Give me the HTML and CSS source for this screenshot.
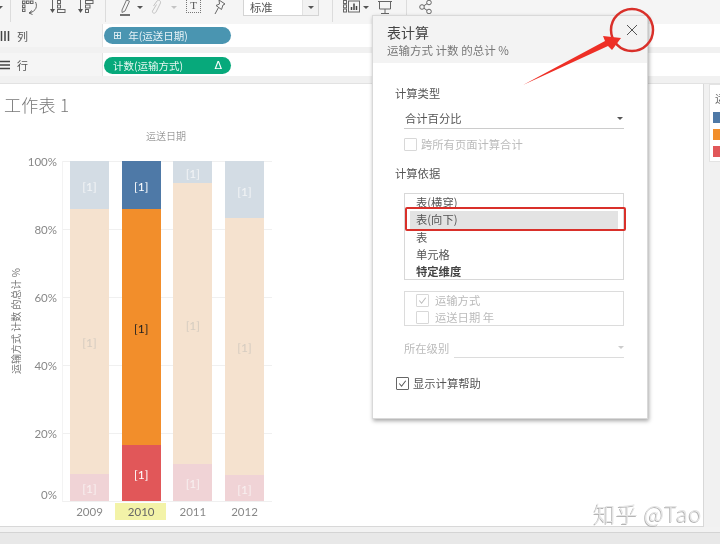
FILE: index.html
```html
<!DOCTYPE html>
<html lang="zh">
<head>
<meta charset="utf-8">
<title>表计算</title>
<link rel="stylesheet" href="styles.css">
</head>
<body>
<div class="app">
  <header class="toolbar">
    <span class="caret caret-edge"></span>
    <span class="tb-sep tb-sep-a"></span>
    <svg class="tb-ic tb-swap" viewBox="0 0 16 15"><rect x="0.500" y="1" width="2.500" height="2.500"/><rect x="4.500" y="1" width="2.500" height="2.500"/><rect x="8.500" y="1" width="2.500" height="2.500"/><rect x="0.500" y="5" width="2.500" height="2.500"/><rect x="0.500" y="9" width="2.500" height="2.500"/><path d="M13.500 2c2 4 1 9-6 11M10 10.500 7 13l3.500 1.500"/></svg>
    <svg class="tb-ic tb-sort" viewBox="0 0 16 14"><path d="M2.500 0v11" /><path class="tb-solid" d="M0 9h5l-2.500 4z"/><rect x="7.500" y="0.500" width="3" height="3"/><rect x="7.500" y="5" width="3" height="3"/><rect x="7.500" y="9.500" width="7.500" height="3"/></svg>
    <svg class="tb-ic tb-sort2" viewBox="0 0 16 14"><path d="M2.500 0v11"/><path class="tb-solid" d="M0 9h5l-2.500 4z"/><rect x="7.500" y="0.500" width="7.500" height="3"/><rect x="7.500" y="5" width="4.500" height="3"/><rect x="7.500" y="9.500" width="3" height="3"/></svg>
    <span class="tb-sep tb-sep-b"></span>
    <svg class="tb-ic tb-pen" viewBox="0 0 11 16"><path d="M2 10 6.500 0l3 1.200L5 11l-3 1.500z"/><path class="tb-under" d="M0 15h10"/></svg>
    <span class="caret caret-pen"></span>
    <svg class="tb-ic tb-clip" viewBox="0 0 11 15"><path d="M2.500 6 6 1c1.500-1.500 4-.5 3.500 2L5 12c-1 2-4 1.500-3.500-1l4-6.500"/></svg>
    <span class="caret caret-clip"></span>
    <span class="tb-t">T</span>
    <svg class="tb-ic tb-pin" viewBox="0 0 12 15"><path d="M5 0l6 4-2 1-1.500 4.500L2 5.500 5.500 4zM4.500 7.500 1 14"/></svg>
    <div class="tb-select"><span class="tb-select-text">标准</span><span class="tb-select-drop"><span class="caret"></span></span></div>
    <span class="tb-sep tb-sep-c"></span>
    <svg class="tb-ic tb-show" viewBox="0 0 17 13"><rect x="0.500" y="0.500" width="3" height="3"/><rect x="0.500" y="4.800" width="3" height="3"/><rect x="0.500" y="9" width="3" height="3"/><rect x="5.500" y="1" width="11" height="11"/><path class="tb-bars" d="M8.500 10V7M11 10V3.500M13.500 10V6"/></svg>
    <span class="caret caret-show"></span>
    <svg class="tb-ic tb-present" viewBox="0 0 14 15"><path d="M0 1.500h14M1.500 1.500v7.500h11V1.500M7 9v4.500M3 13.500h8"/></svg>
    <span class="tb-sep tb-sep-d"></span>
    <svg class="tb-ic tb-share" viewBox="0 0 13 14"><circle cx="3" cy="7" r="2.300"/><circle cx="10" cy="2.500" r="2.300"/><circle cx="10" cy="11.500" r="2.300"/><path d="M5 5.700l3-2M5 8.300l3 2"/></svg>
  </header>

  <section class="shelf shelf-col">
    <div class="shelf-label"><svg class="shelf-ic" viewBox="0 0 9 10"><path d="M1 0v10M4.500 0v10M8 0v10"/></svg><span>列</span></div>
    <div class="shelf-body"><div class="pill pill-blue"><span class="pill-plus">⊞</span><span>年(运送日期)</span></div></div>
  </section>
  <section class="shelf shelf-row">
    <div class="shelf-label"><svg class="shelf-ic" viewBox="0 0 10 9"><path d="M0 1h10M0 4.500h10M0 8h10"/></svg><span>行</span></div>
    <div class="shelf-body"><div class="pill pill-green"><span>计数(运输方式)</span><span class="pill-delta">Δ</span></div></div>
  </section>

  <main class="workspace">
    <div class="sheet">
      <h1 class="sheet-title">工作表 1</h1>
      <div class="col-title">运送日期</div>
      <div class="chart">
        <div class="y-title"><span>运输方式 计数 的总计 %</span></div>
        <div class="y-axis"><span>100%</span><span>80%</span><span>60%</span><span>40%</span><span>20%</span><span class="y-zero">0%</span></div>
        <div class="plot-wrap">
          <div class="plot">
            <div class="bar dim">
              <div class="seg seg-blue" style="height:14.1%">[1]</div>
              <div class="seg seg-orange" style="height:77.9%">[1]</div>
              <div class="seg seg-red" style="height:8%">[1]</div>
            </div>
            <div class="bar">
              <div class="seg seg-blue" style="height:14.1%">[1]</div>
              <div class="seg seg-orange" style="height:69.4%">[1]</div>
              <div class="seg seg-red" style="height:16.5%">[1]</div>
            </div>
            <div class="bar dim">
              <div class="seg seg-blue" style="height:6.5%">[1]</div>
              <div class="seg seg-orange" style="height:82.6%">[1]</div>
              <div class="seg seg-red" style="height:10.9%">[1]</div>
            </div>
            <div class="bar dim">
              <div class="seg seg-blue" style="height:16.8%">[1]</div>
              <div class="seg seg-orange" style="height:75.5%">[1]</div>
              <div class="seg seg-red" style="height:7.7%">[1]</div>
            </div>
          </div>
          <div class="x-axis"><span>2009</span><span class="x-hot">2010</span><span>2011</span><span>2012</span></div>
        </div>
      </div>
      <div class="watermark">知乎 @Tao</div>
    </div>
    <aside class="legend">
      <div class="legend-title">运</div>
      <div class="legend-swatch sw-blue"></div>
      <div class="legend-swatch sw-orange"></div>
      <div class="legend-swatch sw-red"></div>
    </aside>
  </main>
  <div class="status-gap"></div>
  <footer class="status"></footer>

  <div class="dialog">
    <div class="dlg-head">
      <div class="dlg-title">表计算</div>
      <div class="dlg-sub">运输方式 计数 的总计 %</div>
      <svg class="dlg-close" viewBox="0 0 10 10"><path d="M0 0l10 10M10 0L0 10"/></svg>
    </div>
    <div class="dlg-body">
      <div class="dlg-label dl-type">计算类型</div>
      <div class="combo"><span>合计百分比</span><span class="caret caret-dark"></span></div>
      <label class="check check-off"><span class="box"></span><span>跨所有页面计算合计</span></label>
      <div class="dlg-label dl-basis">计算依据</div>
      <div class="listbox">
        <div class="li li-clip">表(横穿)</div>
        <div class="li li-sel">表(向下)</div>
        <div class="li">表</div>
        <div class="li">单元格</div>
        <div class="li li-bold">特定维度</div>
      </div>
      <div class="dims">
        <label class="check check-off"><span class="box box-on"><svg viewBox="0 0 12 12"><path d="M2.500 6l2.500 3 4.500-6"/></svg></span><span>运输方式</span></label>
        <label class="check check-off"><span class="box"></span><span>运送日期 年</span></label>
      </div>
      <div class="level"><span class="level-label">所在级别</span><span class="level-combo"><span class="caret caret-faint"></span></span></div>
      <label class="check check-help"><span class="box box-on"><svg viewBox="0 0 12 12"><path d="M2.500 6l2.500 3 4.500-6"/></svg></span><span>显示计算帮助</span></label>
    </div>
  </div>

  <div class="mark-rect"></div>
  <svg class="mark-arrow" viewBox="0 0 720 544">
    <circle cx="632" cy="30" r="21"/>
    <polygon points="523,85 605,41 603,36 621,38 612,50 608,46"/>
  </svg>
</div>
</body>
</html>
```
FILE: styles.css
```css
* { box-sizing: border-box; }
html, body { margin: 0; padding: 0; }
body {
  width: 720px;
  height: 544px;
  overflow: hidden;
  background: #fff;
  font-family: "Noto Sans CJK SC", "Lato", sans-serif;
  font-size: 12px;
  color: #555;
}
.app {
  position: relative;
  width: 720px;
  height: 544px;
  display: flex;
  flex-direction: column;
  background: #f1f1f1;
  filter: blur(0.35px);
}

/* toolbar */
.toolbar {
  position: relative;
  height: 24px;
  background: #f5f5f5;
  flex: none;
  overflow: hidden;
}
.toolbar > * { position: absolute; }
.tb-sep { top: 0; width: 1px; height: 22px; background: #dcdcdc; }
.tb-sep-a { left: 10px; }
.tb-sep-b { left: 105px; }
.tb-sep-c { left: 332px; }
.tb-sep-d { left: 406px; }
.tb-ic { fill: none; stroke: #666; stroke-width: 1; }
.tb-solid { fill: #555; stroke: none; }
.tb-swap { left: 22px; top: 0; width: 16px; height: 15px; }
.tb-sort { left: 50px; top: 0; width: 16px; height: 14px; }
.tb-sort2 { left: 78px; top: 0; width: 16px; height: 14px; }
.tb-pen { left: 120px; top: 0; width: 11px; height: 16px; stroke: #777; }
.tb-under { stroke: #444; stroke-width: 1.500; }
.tb-clip { left: 151px; top: 0; width: 11px; height: 15px; stroke: #c4c4c4; }
.tb-t {
  left: 186px;
  top: 0;
  width: 15px;
  height: 13px;
  border: 1px dotted #777;
  border-top: 0;
  font-family: "Liberation Serif", serif;
  font-size: 11px;
  line-height: 11px;
  text-align: center;
  color: #555;
}
.tb-pin { left: 214px; top: 0; width: 12px; height: 15px; }
.tb-select {
  left: 243px;
  top: -2px;
  width: 76px;
  height: 18px;
  display: flex;
  align-items: center;
  background: #fff;
  border: 1px solid #d4d4d4;
}
.tb-select-text { flex: 1; padding-left: 6px; font-size: 11.300px; color: #555; }
.tb-select-drop {
  width: 16px;
  height: 100%;
  display: flex;
  align-items: center;
  justify-content: center;
  border-left: 1px solid #e2e2e2;
  background: #f2f2f2;
}
.tb-show { left: 343px; top: 0; width: 17px; height: 13px; }
.tb-bars { stroke: #444; stroke-width: 1.500; }
.tb-present { left: 378px; top: 0; width: 14px; height: 15px; }
.tb-share { left: 419px; top: 0; width: 13px; height: 14px; }
.caret {
  display: inline-block;
  width: 0;
  height: 0;
  border-left: 3px solid transparent;
  border-right: 3px solid transparent;
  border-top: 3px solid #555;
}
.caret-edge { left: -3px; top: 6px; }
.caret-pen { left: 137px; top: 6px; }
.caret-clip { left: 171px; top: 6px; border-top-color: #c4c4c4; }
.caret-show { left: 363px; top: 6px; }

/* shelves */
.shelf { display: flex; height: 23px; flex: none; }
.shelf-col { background: #fff; }
.shelf-row { margin-top: 6px; height: 23px; }
.shelf-label {
  width: 103px;
  display: flex;
  align-items: center;
  gap: 7px;
  font-size: 11px;
  background: #f5f5f5;
  border-right: 1px solid #e3e3e3;
  color: #555;
}
.shelf-ic { width: 10px; height: 10px; fill: none; stroke: #444; stroke-width: 1.500; }
.shelf-body { flex: 1; padding: 3px 1px; background: #fff; }
.shelf-row .shelf-body { padding-top: 4px; }
.pill {
  width: 127px;
  height: 17px;
  border-radius: 9px;
  color: #fff;
  font-size: 10.500px;
  line-height: 17px;
  display: flex;
  align-items: center;
}
.pill-blue { background: #4a95b1; gap: 6px; padding-left: 9px; color: #e6f2f6; }
.pill-plus { font-family: "DejaVu Sans", sans-serif; font-size: 11px; }
.pill-green { background: #07a97b; justify-content: space-between; padding: 0 9px; color: #e6f7f1; }
.pill-delta { font-family: "DejaVu Sans", sans-serif; font-size: 11px; color: #fff; }

/* worksheet */
.workspace {
  margin-top: 7px;
  height: 444px;
  flex: none;
  display: flex;
  border-top: 1px solid #e2e2e2;
}
.sheet {
  position: relative;
  width: 704px;
  background: #fff;
  border-right: 1px solid #d8d8d8;
  border-bottom: 1px solid #d8d8d8;
}
.sheet-title {
  margin: 11px 0 0 4px;
  font-size: 17px;
  line-height: 20px;
  font-weight: 300;
  color: #777;
  letter-spacing: 0.3px;
}
.col-title {
  margin: 14px 0 0 146px;
  font-size: 10px;
  line-height: 14px;
  color: #777;
  font-weight: 300;
}
.chart { display: flex; margin-top: 18px; }
.y-title {
  width: 26px;
  height: 320px;
  display: flex;
  justify-content: center;
  align-items: center;
  padding: 0 0 0 5px;
}
.y-title span {
  display: block;
  writing-mode: vertical-rl;
  text-orientation: sideways;
  transform: rotate(180deg);
  font-size: 10px;
  line-height: 12px;
  color: #777;
  white-space: pre;
}
.y-axis {
  width: 31px;
  height: 340px;
  padding-top: 1px;
  display: grid;
  grid-template-rows: repeat(5, 68px) 0;
  justify-items: end;
  font-family: "Lato", sans-serif;
  font-size: 11.500px;
  color: #888;
}
.y-axis span { height: 0; line-height: 0; }
.y-axis .y-zero { transform: translateY(-7px); }
.plot-wrap { margin-left: 5px; width: 210px; }
.plot {
  height: 341px;
  display: flex;
  gap: 12.670px;
  padding: 0 7px;
  background-image: repeating-linear-gradient(to bottom, #f0f0f0 0, #f0f0f0 1px, transparent 1px, transparent 68px);
  border-left: 1px solid #f3f3f3;
  border-bottom: 1px solid #f0f0f0;
}
.bar { width: 39px; display: flex; flex-direction: column; }
.seg {
  display: flex;
  align-items: center;
  justify-content: center;
  padding-top: 3px;
  font-family: "Lato", sans-serif;
  font-size: 12px;
}
.seg-blue { background: #4e79a7; color: #fff; }
.seg-orange { background: #f28e2b; color: #222; }
.seg-red { background: #e15759; color: #fff; }
.dim .seg-blue { background: #d3dce4; color: #f2f4f6; }
.dim .seg-orange { background: #f5e2cf; color: #d5ccc0; }
.dim .seg-red { background: #f0d3d6; color: #f8f0f0; }
.x-axis {
  display: flex;
  gap: 0.670px;
  padding-left: 1px;
  margin-top: 1px;
  font-family: "Lato", sans-serif;
  font-size: 11.500px;
  color: #888;
}
.x-axis span {
  width: 51px;
  height: 17px;
  padding-left: 2px;
  line-height: 17px;
  text-align: center;
}
.x-hot { background: #f3f3a8; color: #666; }
.watermark {
  position: absolute;
  right: 1px;
  bottom: 0;
  font-size: 22px;
  line-height: 28px;
  letter-spacing: 0.500px;
  font-weight: 300;
  color: #e4e4e4;
  text-shadow: -1px 1px 0 #b5b5b5;
}
.legend {
  margin: 0 0 0 5px;
  width: 11px;
  height: 78px;
  padding: 6px 0 0 3px;
  background: #fff;
  border: 1px solid #e3e3e3;
  border-right: 0;
  overflow: hidden;
}
.legend-title { height: 21px; padding-left: 2px; font-size: 11px; line-height: 14px; color: #666; white-space: nowrap; }
.legend-swatch { height: 11px; margin-bottom: 6px; }
.sw-blue { background: #4e79a7; }
.sw-orange { background: #f28e2b; }
.sw-red { background: #e15759; }
.status-gap { height: 6px; flex: none; border-bottom: 1px solid #d4d4d4; background: #f2f2f2; }
.status { flex: 1; background: #e8e8e8; }

/* dialog */
.dialog {
  position: absolute;
  left: 372px;
  top: 15px;
  width: 276px;
  height: 404px;
  background: #fff;
  border: 1px solid #d9d9d9;
  box-shadow: 1px 2px 4px rgba(0, 0, 0, 0.35);
  font-size: 11.300px;
}
.dlg-head {
  position: relative;
  height: 47px;
  padding: 6px 0 0 14px;
  background: #f3f3f3;
}
.dlg-title { font-size: 14px; line-height: 20px; color: #444; }
.dlg-sub { font-size: 11.500px; line-height: 16px; color: #777; }
.dlg-close {
  position: absolute;
  left: 254px;
  top: 9px;
  width: 10px;
  height: 10px;
  fill: none;
  stroke: #555;
  stroke-width: 1;
}
.dlg-body { padding: 21px 0 0 22px; }
.dlg-label { line-height: 18px; color: #555; }
.combo {
  margin: 6px 0 0 9px;
  width: 220px;
  height: 21px;
  padding: 0 1px;
  display: flex;
  align-items: center;
  justify-content: space-between;
  border-bottom: 1px solid #ccc;
  color: #555;
}
.check { display: flex; align-items: center; gap: 4px; line-height: 17px; color: #555; }
.box {
  width: 13px;
  height: 13px;
  border: 1px solid #666;
  border-radius: 1px;
  display: block;
  flex: none;
  background: #fff;
}
.box svg { display: block; width: 11px; height: 11px; fill: none; stroke: #555; stroke-width: 1.100; }
.check-off { color: #bbb; }
.check-off .box { border-color: #d8d8d8; }
.check-off .box svg { stroke: #bbb; }
.dlg-body > .check-off { margin: 7px 0 0 9px; }
.dl-basis { margin-top: 11px; }
.listbox {
  position: relative;
  margin: 11px 0 0 9px;
  width: 220px;
  height: 87px;
  border: 1px solid #d8d8d8;
  overflow: hidden;
}
.li { height: 17px; line-height: 16px; padding-left: 11px; color: #555; }
.li-clip { height: 17px; line-height: 17px; }
.li-sel { margin: 0 5px; padding-left: 6px; height: 18px; line-height: 16px; background: #e3e3e3; }
.li-bold { font-weight: 700; color: #444; }
.dims {
  margin: 11px 0 0 9px;
  width: 220px;
  height: 35px;
  padding: 0 0 0 11px;
  border: 1px solid #dcdcdc;
}
.dims .check { gap: 6px; line-height: 17px; height: 17px; }
.level { display: flex; margin: 12px 0 0 9px; width: 220px; height: 20px; }
.level-label { width: 50px; line-height: 20px; color: #bbb; }
.level-combo {
  flex: 1;
  display: flex;
  align-items: center;
  justify-content: flex-end;
  border-bottom: 1px solid #dcdcdc;
}
.caret-faint { border-top-color: #ccc; }
.check-help { margin: 17px 0 0 1px; }

/* annotations */
.mark-rect {
  position: absolute;
  left: 405px;
  top: 207px;
  width: 221px;
  height: 24px;
  border: 2px solid #d9302a;
  border-radius: 2px;
}
.mark-arrow {
  position: absolute;
  left: 0;
  top: 0;
  width: 720px;
  height: 544px;
  pointer-events: none;
}
.mark-arrow circle { fill: none; stroke: #d9302a; stroke-width: 2.500; }
.mark-arrow polygon { fill: #ee2f26; }
```
